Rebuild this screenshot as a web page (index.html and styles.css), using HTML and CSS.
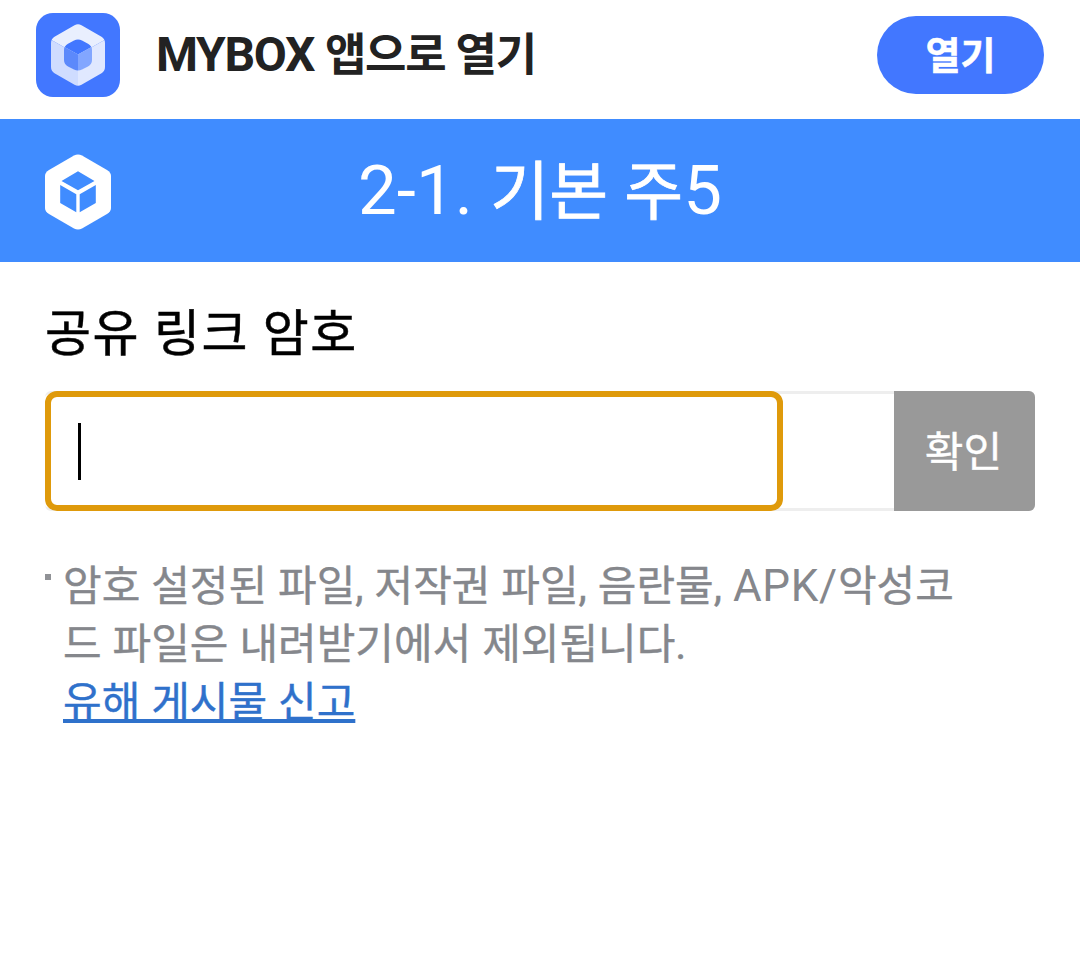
FILE: index.html
```html
<!DOCTYPE html>
<html lang="ko">
<head>
  <meta charset="UTF-8" />
  <meta name="viewport" content="width=device-width" />
  <title>MYBOX</title>
  <link rel="stylesheet" href="styles.css">
</head>
<body>

  <div class="app-banner">
    <svg class="app-icon" viewBox="0 0 84 84">
      <rect width="84" height="84" rx="17" fill="#4277ff" />
      <clipPath id="hex"><path d="M38.500 12.300Q42 10 45.500 12.300L65.500 23.800Q69 26 69 30V54Q69 58 65.500 60.200L45.500 71.700Q42 74 38.500 71.700L18.500 60.200Q15 58 15 54V30Q15 26 18.500 23.800Z" /></clipPath>
      <g clip-path="url(#hex)">
        <path d="M12 25L42 8L72 25L42 42Z" fill="#e9effe" />
        <path d="M12 25L42 42V78H12Z" fill="#cfdcff" />
        <path d="M72 25L42 42V78H72Z" fill="#e0e8ff" />
      </g>
      <clipPath id="core"><path d="M38 27.500Q42 25.300 46 27.500L52 30.800Q56 33 56 37V47Q56 51 52 53.500L46 56.500Q42 58.500 38 56.500L32 53.500Q28 51 28 47V37Q28 33 32 30.800Z" /></clipPath>
      <g clip-path="url(#core)">
        <path d="M26 32.500L42 22L58 32.500L42 41.500Z" fill="#4277ff" />
        <path d="M26 32.500L42 41.500V60H26Z" fill="#5c89fb" />
        <path d="M58 32.500L42 41.500V60H58Z" fill="#82a6ff" />
      </g>
    </svg>
    <strong class="app-name">MYBOX <span class="ko">앱으로 열기</span></strong>
    <a class="open-button" href="#">열기</a>
  </div>

  <header class="header">
    <svg class="logo" viewBox="0 0 66 76">
      <path d="M29 1.500Q33 -.7 37 1.500L62 16Q66 18.500 66 22V54Q66 57.500 62 60L37 74.500Q33 76.700 29 74.500L4 60Q0 57.500 0 54V22Q0 18.500 4 16Z" fill="#fff" />
      <path d="M33 17.300L49.500 27L33 36.300L16.500 27ZM15.200 31L31.300 40.300V58.300L15.200 49ZM50.800 31L34.700 40.300V58.300L50.800 49Z" fill="#408cff" />
    </svg>
    <h1 class="title">2-1. <span class="ko">기본 주</span>5</h1>
  </header>

  <main class="content">
    <h2 class="label">공유 링크 암호</h2>
    <div class="password">
      <div class="field"><span class="caret"></span></div>
      <button class="confirm" type="button">확인</button>
    </div>
    <div class="notice">
      <p>암호 설정된 파일, 저작권 파일, 음란물, <span class="en">APK/</span>악성코<br>드 파일은 내려받기에서 제외됩니다.</p>
      <a class="report" href="#">유해 게시물 신고</a>
    </div>
  </main>

</body>
</html>
```
FILE: styles.css
```css
* {
  box-sizing: border-box;
}
body {
  margin: 0;
  background: #fff;
  font-family: Roboto, "Noto Sans CJK KR", sans-serif;
}
.app-banner {
  display: flex;
  align-items: center;
  height: 119px;
  padding: 0 36px 9px;
}
.app-icon {
  width: 84px;
  height: 84px;
}
.app-name {
  margin-left: 36px;
  padding-top: 1px;
  font-size: 48px;
  line-height: 60px;
  letter-spacing: -1.3px;
  color: #222;
}
.app-name .ko {
  font-size: 45px;
  letter-spacing: -1.2px;
}
.open-button {
  width: 167px;
  height: 78px;
  margin-left: auto;
  border-radius: 39px;
  background: #4277ff;
  color: #fff;
  font-size: 38px;
  font-weight: bold;
  line-height: 80px;
  text-align: center;
  text-decoration: none;
  -webkit-text-stroke: 0.5px;
}
.header {
  display: grid;
  grid-template-columns: 66px 1fr 66px;
  align-items: center;
  height: 143px;
  padding: 1px 45px 0;
  background: #408cff;
  color: #fff;
}
.logo {
  width: 66px;
  height: 76px;
}
.title {
  margin: 0;
  font-size: 69px;
  font-weight: normal;
  line-height: 141px;
  letter-spacing: 0.1px;
  text-align: center;
}
.title .ko {
  font-size: 64px;
  -webkit-text-stroke: 0.8px;
}
.content {
  padding: 37px 45px 0;
}
.label {
  margin: 0 0 22px;
  font-size: 50px;
  font-weight: normal;
  line-height: 70px;
  letter-spacing: 1.5px;
  color: #000;
  -webkit-text-stroke: 0.5px;
}
.password {
  display: flex;
  justify-content: space-between;
  height: 120px;
  border-top: 3px solid #eee;
  border-bottom: 3px solid #eee;
  border-radius: 6px;
}
.field {
  display: flex;
  align-items: center;
  width: 738px;
  height: 120px;
  margin-top: -3px;
  padding-left: 27px;
  border: 6px solid #df9a0b;
  border-radius: 12px;
  background: #fff;
}
.caret {
  width: 3px;
  height: 57px;
  background: #000;
}
.confirm {
  width: 141px;
  height: 120px;
  margin-top: -3px;
  padding: 0 2px 6px 0;
  border: 0;
  border-radius: 0 6px 6px 0;
  background: #999;
  color: #fff;
  font-family: inherit;
  font-size: 42px;
  -webkit-text-stroke: 0.4px;
}
.notice {
  margin-top: 47px;
  padding-left: 18px;
  font-size: 42px;
  line-height: 58px;
  word-spacing: 0.5px;
  color: #85878c;
  -webkit-text-stroke: 0.4px;
}
.notice p {
  margin: 0;
}
.notice p::before {
  content: "";
  float: left;
  width: 6px;
  height: 6px;
  margin: 16px 0 0 -18px;
  background: #909296;
}
.notice .en {
  font-size: 44px;
  letter-spacing: 0.7px;
  line-height: 1;
  -webkit-text-stroke: 0;
}
.report {
  color: #2f71cb;
  text-decoration-thickness: 4px;
  text-decoration-skip-ink: none;
}
```
